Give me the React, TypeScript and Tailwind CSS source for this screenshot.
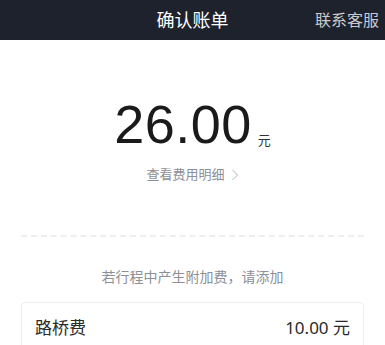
import React from "react";

export default function App() {
  const font = { fontFamily: '"Noto Sans", "Noto Sans CJK SC", sans-serif' };
  return (
    <div className="w-[385px] h-[345px] bg-white overflow-hidden" style={font}>
      <div className="relative h-[40px] bg-[#1e222d] flex items-center justify-center">
        <span className="text-[18px] text-white leading-none">确认账单</span>
        <span className="absolute right-[6px] top-0 h-full flex items-center text-[16px] text-[#c9cbd0] leading-none">联系客服</span>
      </div>
      <div className="flex flex-col items-center">
        <div className="mt-[56px] flex items-end h-[56px]">
          <span className="text-[54px] leading-[56px] text-[#1a1a1a] tracking-[0.5px]" style={{ fontFamily: '"Liberation Sans", Arial, sans-serif' }}>26.00</span>
          <span className="ml-[6px] mb-[5px] text-[13px] leading-none text-[#333]">元</span>
        </div>
        <div className="mt-[16px] flex items-center text-[13px] text-[#8c8f96] leading-none">
          <span>查看费用明细</span>
          <svg width="8" height="12" viewBox="0 0 8 12" className="ml-[6px]">
            <path d="M1.5 1 L6.5 6 L1.5 11" fill="none" stroke="#b5b7bc" strokeWidth="1" />
          </svg>
        </div>
      </div>
      <div className="mx-[21px] mt-[54px] border-t-[2px] border-dashed border-[#eeeeee]" />
      <div className="mt-[33px] text-center text-[14px] text-[#8c8f96] leading-none">若行程中产生附加费，请添加</div>
      <div className="mx-[21px] mt-[18px] h-[60px] border border-[#eeeeee] rounded-[4px] flex items-start justify-between px-[13px] pt-[16px]">
        <span className="text-[17px] text-[#2a2a2a] leading-none">路桥费</span>
        <span className="text-[17px] text-[#2a2a2a] leading-none">10.00 元</span>
      </div>
    </div>
  );
}
